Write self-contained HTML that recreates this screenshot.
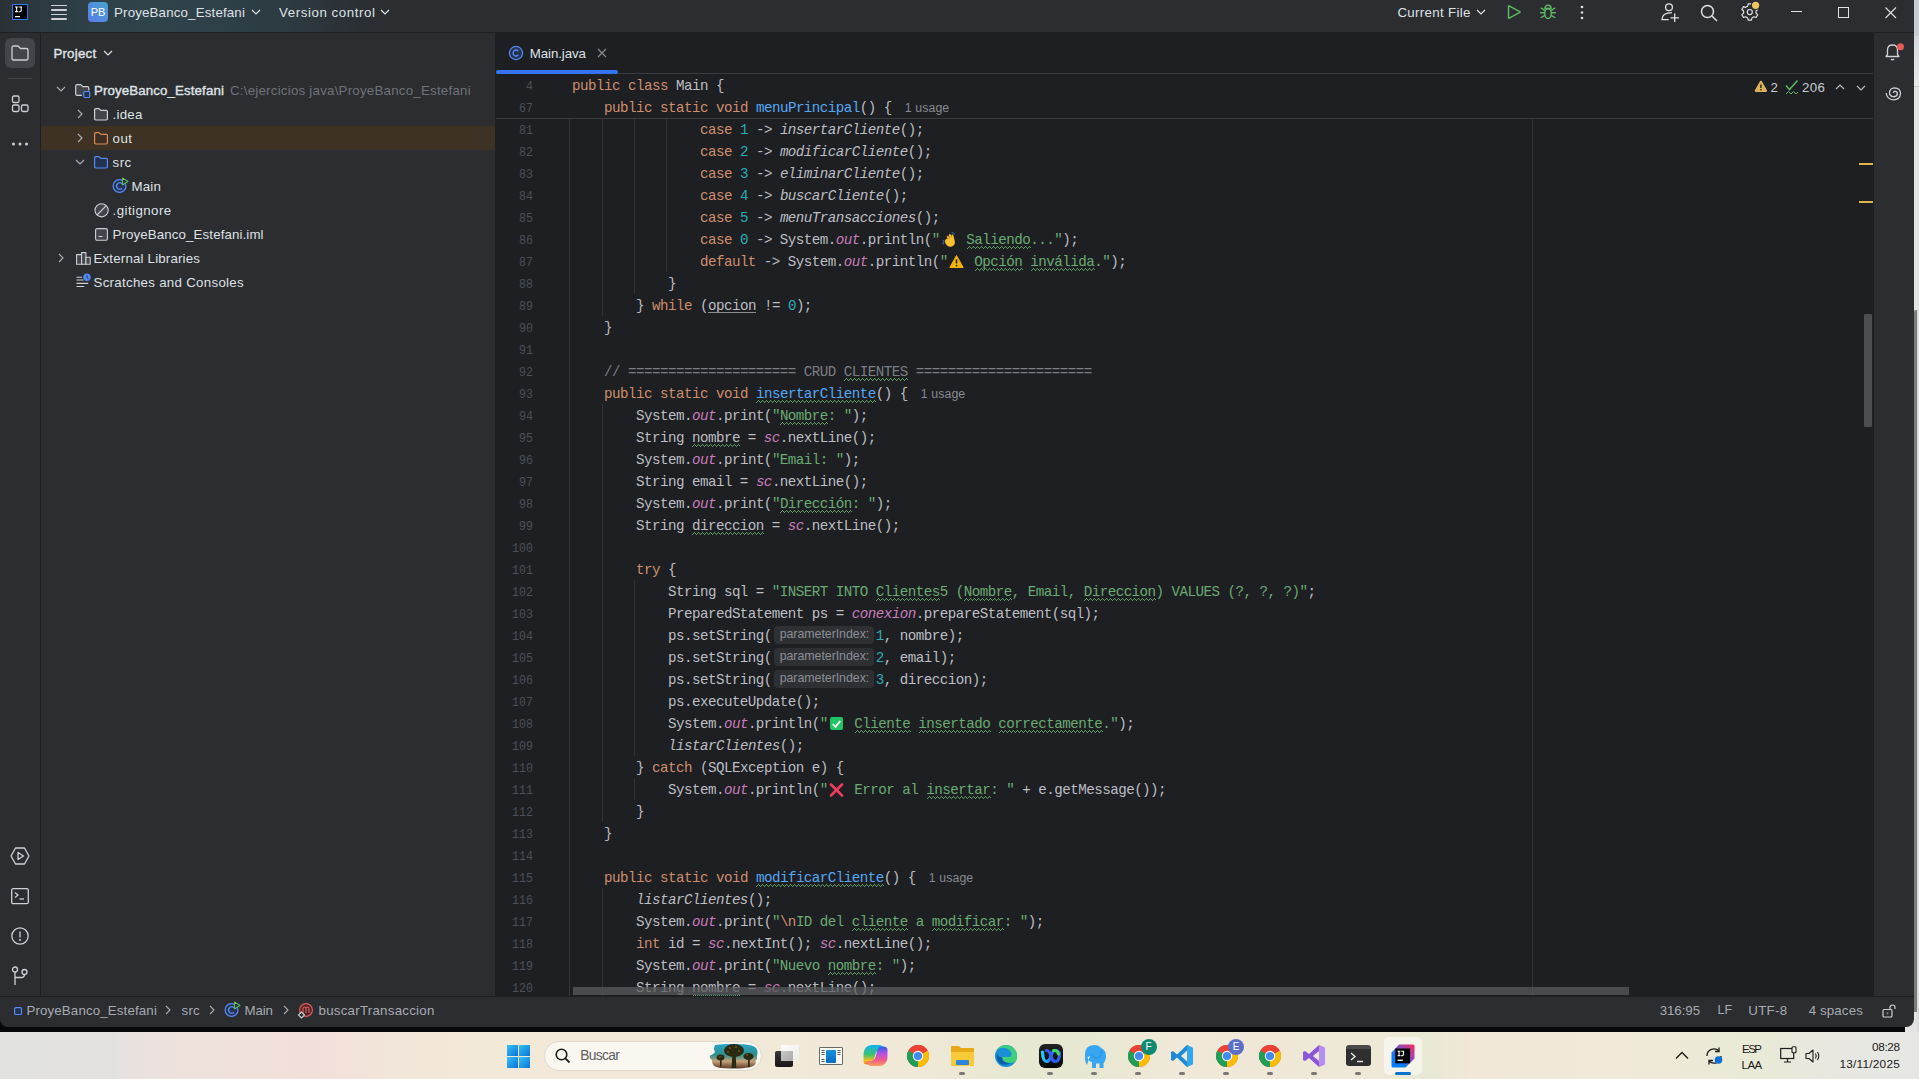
<!DOCTYPE html><html><head><meta charset="utf-8"><style>
*{box-sizing:border-box;margin:0;padding:0}
html,body{width:1919px;height:1079px;overflow:hidden}
body{position:relative;font-family:"Liberation Sans",sans-serif;background:#e4e4e2}
.a{position:absolute}
.ui{font-size:13px;color:#dfe1e5;white-space:nowrap;line-height:16px}
svg{display:block;overflow:visible}
#win{position:absolute;left:0;top:0;width:1914px;height:1027px;background:#2b2d30;overflow:hidden;border-radius:0 0 8px 8px}
#title{left:0;top:0;width:1914px;height:32px;background:linear-gradient(90deg,#2a3237 0px,#2e3f47 80px,#2f434b 150px,#2f414a 200px,#2d3a41 290px,#2b2f33 360px,#2b2d30 410px)}
.code{font-family:"Liberation Mono",monospace;font-size:14.2px;letter-spacing:-0.52px;line-height:22px;white-space:pre;color:#bcbec4}
.ln{font-family:"Liberation Mono",monospace;font-size:13.5px;line-height:22px;color:#4b5059;text-align:right;width:60px;transform:scaleX(0.86);transform-origin:100% 50%}
.k{color:#cf8e6d}.n{color:#2aacb8}.s{color:#6aab73}.m{color:#56a8f5}.f{color:#c77dbb;font-style:italic}.it{font-style:italic}.c{color:#7a7e85}
.em{display:inline-block;width:18.5px;height:22px;vertical-align:top;position:relative}
.em svg{position:absolute;left:1px;top:3px}
.hint{display:inline-block;vertical-align:top;height:22px;position:relative}
.hint span{position:absolute;left:2px;top:2px;height:18px;border-radius:4px;background:#393b40;color:#8c8f94;font-family:"Liberation Sans",sans-serif;font-size:12px;line-height:18px;padding:0 5px;white-space:nowrap}
.usage{font-family:"Liberation Sans",sans-serif;font-size:12.3px;letter-spacing:0.1px;color:#868a91}
.wv{position:absolute;height:3px;background:linear-gradient(90deg,#5e9e64 1px,transparent 1px) 0 2px/4px 1px repeat-x,linear-gradient(90deg,transparent 1px,#5e9e64 1px,#5e9e64 2px,transparent 2px,transparent 3px,#5e9e64 3px) 0 1px/4px 1px repeat-x,linear-gradient(90deg,transparent 2px,#5e9e64 2px,#5e9e64 3px,transparent 3px) 0 0/4px 1px repeat-x}
.guide{position:absolute;width:1px;background:#313337}
.tree{font-size:13px;color:#dfe1e5;line-height:24px;height:24px;white-space:nowrap}
</style></head><body>
<div class="a" style="left:0;top:1014px;width:1905px;height:18px;background:#07090d"></div>
<div id="win">
<div id="title" class="a">
<div class="a" style="left:12px;top:4px;width:16px;height:16px;background:#000;border:1px solid #2d7cf6;"></div>
<svg class="a" style="left:12px;top:4px" width="16" height="16"><path d="M3 3 H6.2 M4.6 3 V7.6 M3 7.6 H6.2" stroke="#fff" stroke-width="1.1" fill="none"/><path d="M6.8 3 H10 M9.2 3 V6.6 Q9.2 7.8 8 7.8 H6.8" stroke="#fff" stroke-width="1.1" fill="none"/><rect x="3" y="12" width="5" height="1.2" fill="#fff"/></svg>
<div class="a" style="left:51px;top:4.6px;width:16px;height:1.8px;background:#cfd1d5;border-radius:1px"></div>
<div class="a" style="left:51px;top:9.1px;width:16px;height:1.8px;background:#cfd1d5;border-radius:1px"></div>
<div class="a" style="left:51px;top:13.6px;width:16px;height:1.8px;background:#cfd1d5;border-radius:1px"></div>
<div class="a" style="left:51px;top:18.1px;width:16px;height:1.8px;background:#cfd1d5;border-radius:1px"></div>
<div class="a" style="left:88px;top:2px;width:20px;height:20px;border-radius:4px;background:linear-gradient(45deg,#5c7be8,#48a2cf)"></div>
<div class="a ui" style="left:89px;top:4px;width:18px;text-align:center;font-size:11px;color:#fff;letter-spacing:0px">PB</div>
<div class="a" style="left:114.00px;top:5.98px;font-size:13.3px;line-height:13.3px;letter-spacing:0.167px;color:#dfe1e5;white-space:nowrap;">ProyeBanco_Estefani</div>
<svg class="a" style="left:251px;top:9px" width="10" height="6"><path d="M1 1 L5 5 L9 1" stroke="#dfe1e5" stroke-width="1.2" fill="none"/></svg>
<div class="a" style="left:279.00px;top:5.98px;font-size:13.3px;line-height:13.3px;letter-spacing:0.571px;color:#dfe1e5;white-space:nowrap;">Version control</div>
<svg class="a" style="left:380px;top:9px" width="10" height="6"><path d="M1 1 L5 5 L9 1" stroke="#dfe1e5" stroke-width="1.2" fill="none"/></svg>
<div class="a" style="left:1397.40px;top:5.98px;font-size:13.3px;line-height:13.3px;letter-spacing:0.327px;color:#dfe1e5;white-space:nowrap;">Current File</div>
<svg class="a" style="left:1476px;top:9px" width="10" height="6"><path d="M1 1 L5 5 L9 1" stroke="#dfe1e5" stroke-width="1.2" fill="none"/></svg>
<svg class="a" style="left:1506px;top:4px" width="16" height="16"><path d="M3 1.8 Q2.5 1.5 2.5 2.3 V13.7 Q2.5 14.5 3.2 14.1 L13.8 8.4 Q14.4 8 13.8 7.6 Z" stroke="#5fb865" stroke-width="1.5" fill="none" stroke-linejoin="round"/></svg>
<svg class="a" style="left:1539px;top:4px" width="18" height="18"><g stroke="#5fb865" stroke-width="1.4" fill="none" stroke-linecap="round"><path d="M5.9 4.4 A3.1 3.1 0 0 1 12.1 4.4 Z"/><ellipse cx="9" cy="9.6" rx="3.3" ry="4.9"/><path d="M2.2 4.2 L5.4 6.2 M1.6 8.8 H5.6 M2.2 13.5 L5.4 11.6 M15.8 4.2 L12.6 6.2 M16.4 8.8 H12.4 M15.8 13.5 L12.6 11.6"/></g></svg>
<svg class="a" style="left:1578px;top:3.5px" width="8" height="18"><g fill="#dfe1e5"><circle cx="4" cy="3" r="1.3"/><circle cx="4" cy="8.5" r="1.3"/><circle cx="4" cy="14" r="1.3"/></g></svg>
<svg class="a" style="left:1660px;top:0px" width="22" height="24"><g stroke="#dfe1e5" stroke-width="1.3" fill="none"><circle cx="9" cy="7.2" r="3.4"/><path d="M8.75 19.6 H2 Q2 12.6 11.9 12.6"/><path d="M14.7 13.6 V22 M10.5 17.8 H19"/></g></svg>
<svg class="a" style="left:1700px;top:4px" width="18" height="18"><g stroke="#dfe1e5" stroke-width="1.5" fill="none"><circle cx="7.5" cy="7.5" r="6"/><path d="M12 12 L17 17"/></g></svg>
<svg class="a" style="left:1740px;top:2px" width="20" height="20"><g transform="translate(0.8 0.6) scale(0.9)" stroke="#dfe1e5" stroke-width="1.3" fill="none"><path d="M8.2 1.5 H11.8 L12.4 4 L14.6 5.3 L17 4.5 L18.8 7.6 L16.9 9.3 V11.7 L18.8 13.4 L17 16.5 L14.6 15.7 L12.4 17 L11.8 19.5 H8.2 L7.6 17 L5.4 15.7 L3 16.5 L1.2 13.4 L3.1 11.7 V9.3 L1.2 7.6 L3 4.5 L5.4 5.3 L7.6 4 Z" stroke-linejoin="round"/><circle cx="10" cy="10.5" r="2.8"/></g><circle cx="15.6" cy="3.3" r="4.8" fill="#2b2d30"/><circle cx="15.6" cy="3.3" r="3.6" fill="#f2c55c"/></svg>
<div class="a" style="left:1791px;top:11px;width:11px;height:1px;background:#dfe1e5"></div>
<div class="a" style="left:1838px;top:7px;width:11px;height:11px;border:1px solid #dfe1e5"></div>
<svg class="a" style="left:1884.5px;top:6.5px" width="12" height="12"><path d="M0.5 0.5 L11 11 M11 0.5 L0.5 11" stroke="#dfe1e5" stroke-width="1.1"/></svg>
</div>
<div class="a" style="left:0;top:32px;width:1914px;height:1px;background:#1e1f22"></div>
<div class="a" style="left:40px;top:33px;width:1px;height:963px;background:#1e1f22"></div>
<div class="a" style="left:5px;top:38px;width:30px;height:30px;border-radius:6px;background:#43454a"></div>
<svg class="a" style="left:11px;top:45px" width="18" height="16"><path d="M1 2.5 Q1 1 2.5 1 H7 L9.5 3.5 H15.5 Q17 3.5 17 5 V13.5 Q17 15 15.5 15 H2.5 Q1 15 1 13.5 Z" stroke="#ced0d6" stroke-width="1.3" fill="none" stroke-linejoin="round"/></svg>
<div class="a" style="left:8px;top:78px;width:24px;height:1px;background:#43454a"></div>
<svg class="a" style="left:11px;top:95px" width="18" height="18"><g stroke="#ced0d6" stroke-width="1.3" fill="none"><rect x="1.5" y="1" width="6.5" height="6.5" rx="1.5"/><rect x="1.5" y="10" width="6.5" height="6.5" rx="1.5"/><rect x="10.5" y="10" width="6.5" height="6.5" rx="1.5"/></g></svg>
<svg class="a" style="left:10px;top:140px" width="20" height="8"><g fill="#ced0d6"><circle cx="3.5" cy="4" r="1.5"/><circle cx="10" cy="4" r="1.5"/><circle cx="16.5" cy="4" r="1.5"/></g></svg>
<svg class="a" style="left:10px;top:847px" width="20" height="18"><g stroke="#ced0d6" stroke-width="1.3" fill="none" stroke-linejoin="round"><path d="M5.5 1 H14.5 L19 9 L14.5 17 H5.5 L1 9 Z"/><path d="M8 5.5 L13.5 9 L8 12.5 Z"/></g></svg>
<svg class="a" style="left:11px;top:888px" width="18" height="17"><g stroke="#ced0d6" stroke-width="1.3" fill="none"><rect x="0.7" y="0.7" width="16.6" height="15" rx="1.5"/><path d="M4 4.5 L7 7 L4 9.5"/><path d="M8.5 11 H13"/></g></svg>
<svg class="a" style="left:11px;top:927px" width="18" height="18"><g stroke="#ced0d6" stroke-width="1.3" fill="none"><circle cx="9" cy="9" r="8.2"/><path d="M9 4.5 V10.5"/></g><circle cx="9" cy="13" r="1" fill="#ced0d6"/></svg>
<svg class="a" style="left:11px;top:966px" width="18" height="20"><g stroke="#ced0d6" stroke-width="1.3" fill="none"><circle cx="4" cy="3.5" r="2.5"/><circle cx="13.5" cy="6" r="2.5"/><path d="M4 6 V19"/><path d="M13.5 8.5 Q13.5 11.5 10 11.5 H4"/></g></svg>
<div id="more"></div>
<div class="a" style="left:53.40px;top:46.78px;font-size:13.3px;line-height:13.3px;letter-spacing:0.217px;color:#dfe1e5;white-space:nowrap;-webkit-text-stroke:0.4px #dfe1e5;">Project</div>
<svg class="a" style="left:103px;top:50px" width="10" height="6"><path d="M1 1 L5 5 L9 1" stroke="#dfe1e5" stroke-width="1.2" fill="none"/></svg>
<div class="a" style="left:41px;top:126px;width:454px;height:24px;background:#3d3223"></div>
<svg class="a" style="left:56px;top:86px" width="10" height="6"><path d="M1 1 L5 5 L9 1" stroke="#a8abb0" stroke-width="1.2" fill="none"/></svg>
<svg class="a" style="left:75px;top:84px" width="16" height="15"><path d="M7 11.3 H2 Q0.7 11.3 0.7 10 V2 Q0.7 0.7 2 0.7 H5.8 L7.8 2.7 H12.5 Q13.8 2.7 13.8 4 V6.5" stroke="#ced0d6" stroke-width="1.2" fill="#43454a" stroke-linejoin="round"/><rect x="8.7" y="7.5" width="6" height="6" rx="1.2" stroke="#548af7" stroke-width="1.2" fill="#25324d"/></svg>
<div class="a" style="left:93.90px;top:83.78px;font-size:13.3px;line-height:13.3px;letter-spacing:0.117px;color:#dfe1e5;white-space:nowrap;-webkit-text-stroke:0.4px #dfe1e5;">ProyeBanco_Estefani</div>
<div class="a" style="left:230.00px;top:83.78px;font-size:13.3px;line-height:13.3px;letter-spacing:0.230px;color:#6f737a;white-space:nowrap;">C:\ejercicios java\ProyeBanco_Estefani</div>
<svg class="a" style="left:77px;top:109px" width="6" height="10"><path d="M1 1 L5 5 L1 9" stroke="#a8abb0" stroke-width="1.2" fill="none"/></svg>
<svg class="a" style="left:94px;top:108px" width="15" height="13"><path d="M0.6 1.8 Q0.6 0.6 1.8 0.6 H5 L6.8 2.4 H12.2 Q13.4 2.4 13.4 3.6 V10.8 Q13.4 12 12.2 12 H1.8 Q0.6 12 0.6 10.8 Z" stroke="#ced0d6" stroke-width="1.2" fill="#43454a" stroke-linejoin="round"/></svg>
<div class="a" style="left:112.50px;top:107.68px;font-size:13.3px;line-height:13.3px;letter-spacing:0.250px;color:#dfe1e5;white-space:nowrap;">.idea</div>
<svg class="a" style="left:77px;top:133px" width="6" height="10"><path d="M1 1 L5 5 L1 9" stroke="#a8abb0" stroke-width="1.2" fill="none"/></svg>
<svg class="a" style="left:94px;top:132px" width="15" height="13"><path d="M0.6 1.8 Q0.6 0.6 1.8 0.6 H5 L6.8 2.4 H12.2 Q13.4 2.4 13.4 3.6 V10.8 Q13.4 12 12.2 12 H1.8 Q0.6 12 0.6 10.8 Z" stroke="#d98b5b" stroke-width="1.2" fill="#3f2e23" stroke-linejoin="round"/></svg>
<div class="a" style="left:112.50px;top:131.68px;font-size:13.3px;line-height:13.3px;letter-spacing:0.500px;color:#dfe1e5;white-space:nowrap;">out</div>
<svg class="a" style="left:75px;top:159px" width="10" height="6"><path d="M1 1 L5 5 L9 1" stroke="#a8abb0" stroke-width="1.2" fill="none"/></svg>
<svg class="a" style="left:94px;top:156px" width="15" height="13"><path d="M0.6 1.8 Q0.6 0.6 1.8 0.6 H5 L6.8 2.4 H12.2 Q13.4 2.4 13.4 3.6 V10.8 Q13.4 12 12.2 12 H1.8 Q0.6 12 0.6 10.8 Z" stroke="#548af7" stroke-width="1.2" fill="#25324d" stroke-linejoin="round"/></svg>
<div class="a" style="left:112.50px;top:155.68px;font-size:13.3px;line-height:13.3px;letter-spacing:0.500px;color:#dfe1e5;white-space:nowrap;">src</div>
<svg class="a" style="left:112px;top:177px" width="17" height="17"><circle cx="7.5" cy="9" r="6.4" stroke="#548af7" stroke-width="1.2" fill="#25324d"/><path d="M10 6.7 A3.2 3.2 0 1 0 10 11.3" stroke="#548af7" stroke-width="1.3" fill="none"/><path d="M10.5 1 L16 4.5 L10.5 8 Z" fill="#2a3a2a" stroke="#5fb865" stroke-width="1.1" stroke-linejoin="round"/></svg>
<div class="a" style="left:131.50px;top:179.68px;font-size:13.3px;line-height:13.3px;letter-spacing:0.167px;color:#dfe1e5;white-space:nowrap;">Main</div>
<svg class="a" style="left:93.5px;top:202.5px" width="16" height="16"><circle cx="7.6" cy="7.3" r="6.6" stroke="#ced0d6" stroke-width="1.1" fill="#43454a"/><path d="M3 12 L12.3 2.7" stroke="#ced0d6" stroke-width="1.1"/></svg>
<div class="a" style="left:112.50px;top:203.68px;font-size:13.3px;line-height:13.3px;letter-spacing:0.444px;color:#dfe1e5;white-space:nowrap;">.gitignore</div>
<svg class="a" style="left:94.5px;top:227.5px" width="14" height="14"><rect x="0.6" y="0.6" width="11.8" height="11.6" rx="1.5" stroke="#ced0d6" stroke-width="1.1" fill="#43454a"/><path d="M3.5 8.5 H7.5" stroke="#ced0d6" stroke-width="1.1"/></svg>
<div class="a" style="left:112.50px;top:227.68px;font-size:13.3px;line-height:13.3px;letter-spacing:0.114px;color:#dfe1e5;white-space:nowrap;">ProyeBanco_Estefani.iml</div>
<svg class="a" style="left:57.5px;top:253px" width="6" height="10"><path d="M1 1 L5 5 L1 9" stroke="#a8abb0" stroke-width="1.2" fill="none"/></svg>
<svg class="a" style="left:75.5px;top:251.5px" width="15" height="13"><g stroke="#ced0d6" stroke-width="1.1" fill="#43454a" stroke-linejoin="round"><rect x="0.6" y="2.6" width="5" height="9.6"/><rect x="5.6" y="0.6" width="4.3" height="11.6"/><rect x="9.9" y="5.2" width="4.3" height="7"/></g></svg>
<div class="a" style="left:93.50px;top:251.68px;font-size:13.3px;line-height:13.3px;letter-spacing:0.176px;color:#dfe1e5;white-space:nowrap;">External Libraries</div>
<svg class="a" style="left:75.5px;top:273px" width="16" height="16"><g stroke="#ced0d6" stroke-width="1.1"><path d="M0.5 4.3 H6.2 M0.5 7 H7.5 M0.5 10.4 H12.2 M0.5 13.5 H8.2"/></g><circle cx="11" cy="4.3" r="3.7" fill="#548af7"/><path d="M11 2.3 V4.5 L12.5 5.7" stroke="#2b2d30" stroke-width="0.9" fill="none"/></svg>
<div class="a" style="left:93.50px;top:275.68px;font-size:13.3px;line-height:13.3px;letter-spacing:0.286px;color:#dfe1e5;white-space:nowrap;">Scratches and Consoles</div>
<div class="a" style="left:495px;top:33px;width:1px;height:963px;background:#1e1f22"></div>
<div class="a" style="left:496px;top:33px;width:1377px;height:963px;background:#1e1f22"></div>
<svg class="a" style="left:508px;top:45px" width="16" height="16"><circle cx="8" cy="8" r="6.6" stroke="#548af7" stroke-width="1.2" fill="#25324d"/><path d="M10.3 6 A3 3 0 1 0 10.3 10" stroke="#548af7" stroke-width="1.3" fill="none"/></svg>
<div class="a" style="left:529.80px;top:46.78px;font-size:13.3px;line-height:13.3px;letter-spacing:-0.088px;color:#dfe1e5;white-space:nowrap;">Main.java</div>
<svg class="a" style="left:597px;top:48px" width="10" height="10"><path d="M1 1 L9 9 M9 1 L1 9" stroke="#8c8f94" stroke-width="1.1"/></svg>
<div class="a" style="left:496px;top:73px;width:1377px;height:1px;background:#393b40"></div>
<div class="a" style="left:496px;top:70px;width:122px;height:4px;border-radius:2px;background:#3574f0"></div>
<div class="a" style="left:496px;top:118px;width:1377px;height:1px;background:#393b40"></div>
<div class="a" style="left:1532px;top:118px;width:1px;height:878px;background:#313337"></div>
<div class="guide" style="left:569px;top:119px;height:877px"></div>
<div class="guide" style="left:602px;top:119px;height:197px"></div>
<div class="guide" style="left:602px;top:404px;height:418px"></div>
<div class="guide" style="left:602px;top:888px;height:108px"></div>
<div class="guide" style="left:634px;top:119px;height:175px"></div>
<div class="guide" style="left:634px;top:580px;height:176px"></div>
<div class="guide" style="left:634px;top:778px;height:22px"></div>
<div class="guide" style="left:666px;top:119px;height:153px"></div>
<div class="a ln" style="left:472.8px;top:75.5px">4</div>
<div class="a code" style="left:572px;top:75px"><span class="k">public</span> <span class="k">class</span> Main {</div>
<div class="a ln" style="left:472.8px;top:97.5px">67</div>
<div class="a code" style="left:572px;top:97px">    <span class="k">public</span> <span class="k">static</span> <span class="k">void</span> <span class="m">menuPrincipal</span>() {<span class="usage" style="margin-left:13px">1 usage</span></div>
<div class="a ln" style="left:472.8px;top:119.5px">81</div>
<div class="a code" style="left:572px;top:119px">                <span class="k">case</span> <span class="n">1</span> -&gt; <span class="it">insertarCliente</span>();</div>
<div class="a ln" style="left:472.8px;top:141.5px">82</div>
<div class="a code" style="left:572px;top:141px">                <span class="k">case</span> <span class="n">2</span> -&gt; <span class="it">modificarCliente</span>();</div>
<div class="a ln" style="left:472.8px;top:163.5px">83</div>
<div class="a code" style="left:572px;top:163px">                <span class="k">case</span> <span class="n">3</span> -&gt; <span class="it">eliminarCliente</span>();</div>
<div class="a ln" style="left:472.8px;top:185.5px">84</div>
<div class="a code" style="left:572px;top:185px">                <span class="k">case</span> <span class="n">4</span> -&gt; <span class="it">buscarCliente</span>();</div>
<div class="a ln" style="left:472.8px;top:207.5px">85</div>
<div class="a code" style="left:572px;top:207px">                <span class="k">case</span> <span class="n">5</span> -&gt; <span class="it">menuTransacciones</span>();</div>
<div class="a ln" style="left:472.8px;top:229.5px">86</div>
<div class="a code" style="left:572px;top:229px">                <span class="k">case</span> <span class="n">0</span> -&gt; System.<span class="f">out</span>.println(<span class="s">&quot;</span><span class="em"><svg width="18" height="16"><g fill="#fbc02d"><path d="M6 13.5 Q3.5 11 4 8.5 L5 7 Q5.8 6.3 6.5 7 L7.2 8 L5.8 5 Q5.5 4 6.5 3.8 Q7.2 3.8 7.6 4.5 L9 7 L7.8 3.2 Q7.6 2.2 8.6 2 Q9.4 2 9.8 2.8 L11 6.2 L10.4 3.5 Q10.3 2.6 11.2 2.5 Q12 2.5 12.3 3.3 L13.5 8 Q14.5 11.5 12.5 13.5 Q9.5 16 6 13.5 Z"/></g><path d="M2 8.5 L3.5 10 M1.5 10.5 L3 12" stroke="#3d6fc0" stroke-width="1.1"/><path d="M10.5 0.8 Q12.5 0.5 13.5 2.5" stroke="#3d6fc0" stroke-width="1.1" fill="none"/></svg></span><span class="s"> </span><span class="s">Saliendo</span><span class="s">...&quot;</span>);</div>
<div class="wv" style="left:966.50px;top:246px;width:64.00px"></div>
<div class="a ln" style="left:472.8px;top:251.5px">87</div>
<div class="a code" style="left:572px;top:251px">                <span class="k">default</span> -&gt; System.<span class="f">out</span>.println(<span class="s">&quot;</span><span class="em"><svg width="15" height="15"><path d="M7.5 1.5 L14.2 13.5 H0.8 Z" fill="#f2b400" stroke="#f2b400" stroke-width="1" stroke-linejoin="round"/><path d="M7.5 5.5 V9.5" stroke="#1e1f22" stroke-width="1.6"/><circle cx="7.5" cy="11.6" r="0.9" fill="#1e1f22"/></svg></span><span class="s"> </span><span class="s">Opción</span><span class="s"> </span><span class="s">inválida</span><span class="s">.&quot;</span>);</div>
<div class="wv" style="left:974.50px;top:268px;width:48.00px"></div>
<div class="wv" style="left:1030.50px;top:268px;width:64.00px"></div>
<div class="a ln" style="left:472.8px;top:273.5px">88</div>
<div class="a code" style="left:572px;top:273px">            }</div>
<div class="a ln" style="left:472.8px;top:295.5px">89</div>
<div class="a code" style="left:572px;top:295px">        } <span class="k">while</span> (opcion != <span class="n">0</span>);</div>
<div class="a ln" style="left:472.8px;top:317.5px">90</div>
<div class="a code" style="left:572px;top:317px">    }</div>
<div class="a ln" style="left:472.8px;top:339.5px">91</div>
<div class="a code" style="left:572px;top:339px"></div>
<div class="a ln" style="left:472.8px;top:361.5px">92</div>
<div class="a code" style="left:572px;top:361px">    <span class="c">// ===================== CRUD </span><span class="c">CLIENTES</span><span class="c"> ======================</span></div>
<div class="wv" style="left:844.00px;top:378px;width:64.00px"></div>
<div class="a ln" style="left:472.8px;top:383.5px">93</div>
<div class="a code" style="left:572px;top:383px">    <span class="k">public</span> <span class="k">static</span> <span class="k">void</span> <span class="m">insertarCliente</span>() {<span class="usage" style="margin-left:13px">1 usage</span></div>
<div class="wv" style="left:756.00px;top:400px;width:120.00px"></div>
<div class="a ln" style="left:472.8px;top:405.5px">94</div>
<div class="a code" style="left:572px;top:405px">        System.<span class="f">out</span>.print(<span class="s">&quot;</span><span class="s">Nombre</span><span class="s">: &quot;</span>);</div>
<div class="wv" style="left:780.00px;top:422px;width:48.00px"></div>
<div class="a ln" style="left:472.8px;top:427.5px">95</div>
<div class="a code" style="left:572px;top:427px">        String nombre = <span class="f">sc</span>.nextLine();</div>
<div class="wv" style="left:692.00px;top:444px;width:48.00px"></div>
<div class="a ln" style="left:472.8px;top:449.5px">96</div>
<div class="a code" style="left:572px;top:449px">        System.<span class="f">out</span>.print(<span class="s">&quot;Email: &quot;</span>);</div>
<div class="a ln" style="left:472.8px;top:471.5px">97</div>
<div class="a code" style="left:572px;top:471px">        String email = <span class="f">sc</span>.nextLine();</div>
<div class="a ln" style="left:472.8px;top:493.5px">98</div>
<div class="a code" style="left:572px;top:493px">        System.<span class="f">out</span>.print(<span class="s">&quot;</span><span class="s">Dirección</span><span class="s">: &quot;</span>);</div>
<div class="wv" style="left:780.00px;top:510px;width:72.00px"></div>
<div class="a ln" style="left:472.8px;top:515.5px">99</div>
<div class="a code" style="left:572px;top:515px">        String direccion = <span class="f">sc</span>.nextLine();</div>
<div class="wv" style="left:692.00px;top:532px;width:72.00px"></div>
<div class="a ln" style="left:472.8px;top:537.5px">100</div>
<div class="a code" style="left:572px;top:537px"></div>
<div class="a ln" style="left:472.8px;top:559.5px">101</div>
<div class="a code" style="left:572px;top:559px">        <span class="k">try</span> {</div>
<div class="a ln" style="left:472.8px;top:581.5px">102</div>
<div class="a code" style="left:572px;top:581px">            String sql = <span class="s">&quot;INSERT INTO </span><span class="s">Clientes</span><span class="s">5</span><span class="s"> (</span><span class="s">Nombre</span><span class="s">, Email, </span><span class="s">Direccion</span><span class="s">) VALUES (?, ?, ?)&quot;</span>;</div>
<div class="wv" style="left:876.00px;top:598px;width:64.00px"></div>
<div class="wv" style="left:964.00px;top:598px;width:48.00px"></div>
<div class="wv" style="left:1084.00px;top:598px;width:72.00px"></div>
<div class="a ln" style="left:472.8px;top:603.5px">103</div>
<div class="a code" style="left:572px;top:603px">            PreparedStatement ps = <span class="f">conexion</span>.prepareStatement(sql);</div>
<div class="a ln" style="left:472.8px;top:625.5px">104</div>
<div class="a code" style="left:572px;top:625px">            ps.setString(<span class="hint" style="width:104px"></span><span class="n">1</span>, nombre);</div>
<div class="a" style="left:774px;top:626px;width:100px;height:18px;border-radius:4px;background:#2e3034"></div>
<div class="a" style="left:779.70px;top:628.38px;font-size:12.4px;line-height:12.4px;letter-spacing:-0.050px;color:#8b8e94;white-space:nowrap;">parameterIndex:</div>
<div class="a ln" style="left:472.8px;top:647.5px">105</div>
<div class="a code" style="left:572px;top:647px">            ps.setString(<span class="hint" style="width:104px"></span><span class="n">2</span>, email);</div>
<div class="a" style="left:774px;top:648px;width:100px;height:18px;border-radius:4px;background:#2e3034"></div>
<div class="a" style="left:779.70px;top:650.38px;font-size:12.4px;line-height:12.4px;letter-spacing:-0.050px;color:#8b8e94;white-space:nowrap;">parameterIndex:</div>
<div class="a ln" style="left:472.8px;top:669.5px">106</div>
<div class="a code" style="left:572px;top:669px">            ps.setString(<span class="hint" style="width:104px"></span><span class="n">3</span>, direccion);</div>
<div class="a" style="left:774px;top:670px;width:100px;height:18px;border-radius:4px;background:#2e3034"></div>
<div class="a" style="left:779.70px;top:672.38px;font-size:12.4px;line-height:12.4px;letter-spacing:-0.050px;color:#8b8e94;white-space:nowrap;">parameterIndex:</div>
<div class="a ln" style="left:472.8px;top:691.5px">107</div>
<div class="a code" style="left:572px;top:691px">            ps.executeUpdate();</div>
<div class="a ln" style="left:472.8px;top:713.5px">108</div>
<div class="a code" style="left:572px;top:713px">            System.<span class="f">out</span>.println(<span class="s">&quot;</span><span class="em"><svg width="15" height="15"><rect x="1" y="1" width="13" height="13" rx="2" fill="#20c463"/><path d="M3.8 8 L6.5 10.8 L11.3 5" stroke="#fff" stroke-width="1.8" fill="none"/></svg></span><span class="s"> </span><span class="s">Cliente</span><span class="s"> </span><span class="s">insertado</span><span class="s"> </span><span class="s">correctamente</span><span class="s">.&quot;</span>);</div>
<div class="wv" style="left:854.50px;top:730px;width:56.00px"></div>
<div class="wv" style="left:918.50px;top:730px;width:72.00px"></div>
<div class="wv" style="left:998.50px;top:730px;width:104.00px"></div>
<div class="a ln" style="left:472.8px;top:735.5px">109</div>
<div class="a code" style="left:572px;top:735px">            <span class="it">listarClientes</span>();</div>
<div class="a ln" style="left:472.8px;top:757.5px">110</div>
<div class="a code" style="left:572px;top:757px">        } <span class="k">catch</span> (SQLException e) {</div>
<div class="a ln" style="left:472.8px;top:779.5px">111</div>
<div class="a code" style="left:572px;top:779px">            System.<span class="f">out</span>.println(<span class="s">&quot;</span><span class="em"><svg width="15" height="15"><path d="M2 2.5 L13 13.5 M13 2.5 L2 13.5" stroke="#ef3b5d" stroke-width="2.6" stroke-linecap="round"/></svg></span><span class="s"> Error al </span><span class="s">insertar</span><span class="s">: &quot;</span> + e.getMessage());</div>
<div class="wv" style="left:926.50px;top:796px;width:64.00px"></div>
<div class="a ln" style="left:472.8px;top:801.5px">112</div>
<div class="a code" style="left:572px;top:801px">        }</div>
<div class="a ln" style="left:472.8px;top:823.5px">113</div>
<div class="a code" style="left:572px;top:823px">    }</div>
<div class="a ln" style="left:472.8px;top:845.5px">114</div>
<div class="a code" style="left:572px;top:845px"></div>
<div class="a ln" style="left:472.8px;top:867.5px">115</div>
<div class="a code" style="left:572px;top:867px">    <span class="k">public</span> <span class="k">static</span> <span class="k">void</span> <span class="m">modificarCliente</span>() {<span class="usage" style="margin-left:13px">1 usage</span></div>
<div class="wv" style="left:756.00px;top:884px;width:128.00px"></div>
<div class="a ln" style="left:472.8px;top:889.5px">116</div>
<div class="a code" style="left:572px;top:889px">        <span class="it">listarClientes</span>();</div>
<div class="a ln" style="left:472.8px;top:911.5px">117</div>
<div class="a code" style="left:572px;top:911px">        System.<span class="f">out</span>.print(<span class="s">&quot;</span><span class="k">\n</span><span class="s">ID del </span><span class="s">cliente</span><span class="s"> a </span><span class="s">modificar</span><span class="s">: &quot;</span>);</div>
<div class="wv" style="left:852.00px;top:928px;width:56.00px"></div>
<div class="wv" style="left:932.00px;top:928px;width:72.00px"></div>
<div class="a ln" style="left:472.8px;top:933.5px">118</div>
<div class="a code" style="left:572px;top:933px">        <span class="k">int</span> id = <span class="f">sc</span>.nextInt(); <span class="f">sc</span>.nextLine();</div>
<div class="a ln" style="left:472.8px;top:955.5px">119</div>
<div class="a code" style="left:572px;top:955px">        System.<span class="f">out</span>.print(<span class="s">&quot;Nuevo </span><span class="s">nombre</span><span class="s">: &quot;</span>);</div>
<div class="wv" style="left:828.00px;top:972px;width:48.00px"></div>
<div class="a ln" style="left:472.8px;top:977.5px">120</div>
<div class="a code" style="left:572px;top:977px">        String nombre = <span class="f">sc</span>.nextLine();</div>
<div class="wv" style="left:692.00px;top:994px;width:48.00px"></div>
<svg class="a" style="left:0;top:0" width="1919" height="1079"><path d="M708 312.5 H756" stroke="#8a8c90" stroke-width="1" fill="none"/></svg>
<div class="a" style="left:1864px;top:314px;width:8px;height:113px;border-radius:1px;background:#4d4e51"></div>
<div class="a" style="left:1859px;top:163px;width:14px;height:2px;background:#e0b44e"></div>
<div class="a" style="left:1859px;top:201px;width:14px;height:2px;background:#e0b44e"></div>
<div class="a" style="left:573px;top:987px;width:1056px;height:8px;background:rgba(90,91,94,0.75)"></div>
<svg class="a" style="left:1754px;top:80px" width="14" height="14"><path d="M6.9 1.8 L12 10.8 H1.8 Z" fill="#dcb35c" stroke="#dcb35c" stroke-width="2.2" stroke-linejoin="round"/><path d="M6.9 4.5 V8" stroke="#1e1f22" stroke-width="1.4"/><rect x="6.2" y="9" width="1.4" height="1.4" fill="#1e1f22"/></svg>
<div class="a" style="left:1770.40px;top:81.08px;font-size:13.3px;line-height:13.3px;letter-spacing:0.000px;color:#c9cbd0;white-space:nowrap;">2</div>
<svg class="a" style="left:1785px;top:79px" width="14" height="16"><path d="M1 6.5 L4.5 10.5 L12.5 1.5" stroke="#5fb865" stroke-width="1.5" fill="none"/><path d="M1 15 L3.5 12.5 L6 15 L8.5 12.5 L11 15 L13 13" stroke="#5fb865" stroke-width="1" fill="none"/></svg>
<div class="a" style="left:1801.90px;top:81.08px;font-size:13.3px;line-height:13.3px;letter-spacing:0.350px;color:#c9cbd0;white-space:nowrap;">206</div>
<svg class="a" style="left:1835px;top:84px" width="10" height="6"><path d="M1 5 L5 1 L9 5" stroke="#bcbec4" stroke-width="1.1" fill="none"/></svg>
<svg class="a" style="left:1856px;top:85px" width="10" height="6"><path d="M1 1 L5 5 L9 1" stroke="#bcbec4" stroke-width="1.1" fill="none"/></svg>
<div class="a" style="left:1873px;top:33px;width:1px;height:963px;background:#1e1f22"></div>
<svg class="a" style="left:1884px;top:42px" width="20" height="22"><g stroke="#ced0d6" stroke-width="1.3" fill="none"><path d="M2 14.5 H15 L13.5 12.5 V8 Q13.5 3 8.5 3 Q3.5 3 3.5 8 V12.5 Z" stroke-linejoin="round"/><path d="M7 17 Q8.5 18.5 10 17"/></g><circle cx="16.5" cy="4.7" r="3.5" fill="#e55b5b"/></svg>
<svg class="a" style="left:1885px;top:84px" width="18" height="18"><path d="M8.5 9 Q8.5 7 10.5 7.3 Q12.8 7.8 12.3 10.3 Q11.5 13 8 12.7 Q4.3 12 4.5 8.5 Q5 4 9.5 3.8 Q15.5 4 15.5 9.5 Q15 15.8 8.5 15.8 Q2 15.5 1.2 9" stroke="#ced0d6" stroke-width="1.3" fill="none"/></svg>
<div class="a" style="left:0;top:996px;width:1914px;height:1px;background:#1e1f22"></div>
<svg class="a" style="left:14px;top:1007px" width="9" height="9"><rect x="0.6" y="0.6" width="6.9" height="6.9" rx="1.3" stroke="#548af7" stroke-width="1.2" fill="#25324d"/></svg>
<div class="a" style="left:26.40px;top:1003.88px;font-size:13.3px;line-height:13.3px;letter-spacing:0.144px;color:#a8abb0;white-space:nowrap;">ProyeBanco_Estefani</div>
<svg class="a" style="left:165px;top:1005px" width="6" height="10"><path d="M1 1 L5 5 L1 9" stroke="#a8abb0" stroke-width="1.1" fill="none"/></svg>
<div class="a" style="left:181.50px;top:1003.88px;font-size:13.3px;line-height:13.3px;letter-spacing:0.250px;color:#a8abb0;white-space:nowrap;">src</div>
<svg class="a" style="left:209px;top:1005px" width="6" height="10"><path d="M1 1 L5 5 L1 9" stroke="#a8abb0" stroke-width="1.1" fill="none"/></svg>
<svg class="a" style="left:224px;top:1001px" width="17" height="17"><circle cx="7.5" cy="9" r="6.4" stroke="#548af7" stroke-width="1.2" fill="#25324d"/><path d="M10 6.7 A3.2 3.2 0 1 0 10 11.3" stroke="#548af7" stroke-width="1.3" fill="none"/><path d="M10.5 1 L16 4.5 L10.5 8 Z" fill="#2a3a2a" stroke="#5fb865" stroke-width="1.1" stroke-linejoin="round"/></svg>
<div class="a" style="left:244.60px;top:1003.88px;font-size:13.3px;line-height:13.3px;letter-spacing:-0.200px;color:#a8abb0;white-space:nowrap;">Main</div>
<svg class="a" style="left:283px;top:1005px" width="6" height="10"><path d="M1 1 L5 5 L1 9" stroke="#a8abb0" stroke-width="1.1" fill="none"/></svg>
<svg class="a" style="left:297px;top:1002px" width="17" height="17"><circle cx="9" cy="8" r="6.4" stroke="#e55b5b" stroke-width="1.2" fill="#4a2626"/><path d="M6 11 V6.5 Q6 5 7.5 5 Q9 5 9 6.5 V11 M9 6.5 Q9 5 10.5 5 Q12 5 12 6.5 V11" stroke="#e55b5b" stroke-width="1.1" fill="none"/><path d="M4.5 10 L7.5 13 L4.5 16 L1.5 13 Z" fill="#2b2d30" stroke="#ced0d6" stroke-width="1.1"/></svg>
<div class="a" style="left:318.50px;top:1003.88px;font-size:13.3px;line-height:13.3px;letter-spacing:0.250px;color:#a8abb0;white-space:nowrap;">buscarTransaccion</div>
<div class="a" style="left:1659.70px;top:1003.88px;font-size:13.3px;line-height:13.3px;letter-spacing:-0.060px;color:#a8abb0;white-space:nowrap;">316:95</div>
<div class="a" style="left:1717.60px;top:1003.96px;font-size:12.6px;line-height:12.6px;letter-spacing:0.000px;color:#a8abb0;white-space:nowrap;">LF</div>
<div class="a" style="left:1748.30px;top:1003.88px;font-size:13.3px;line-height:13.3px;letter-spacing:0.300px;color:#a8abb0;white-space:nowrap;">UTF-8</div>
<div class="a" style="left:1808.70px;top:1003.88px;font-size:13.3px;line-height:13.3px;letter-spacing:0.129px;color:#a8abb0;white-space:nowrap;">4 spaces</div>
<svg class="a" style="left:1882px;top:1004px" width="16" height="14"><rect x="1" y="5.5" width="9" height="7.5" rx="1.2" stroke="#ced0d6" stroke-width="1.2" fill="none"/><path d="M8 5.5 V3.5 Q8 1 10.5 1 Q13 1 13 3.5 V5" stroke="#ced0d6" stroke-width="1.2" fill="none"/><rect x="4.7" y="8.3" width="1.6" height="2" fill="#8c8f94"/></svg>
</div>
<div class="a" style="left:1914px;top:0;width:5px;height:36px;background:#c6cbd4"></div>
<div class="a" style="left:1914px;top:36px;width:5px;height:50px;background:linear-gradient(180deg,#d5d8dd,#e9e9e9)"></div>
<div class="a" style="left:1914px;top:86px;width:5px;height:1px;background:#c9c9c9"></div>
<div class="a" style="left:1914px;top:310px;width:3px;height:702px;background:#7b7b7b;border-radius:2px 0 0 0"></div>
<div class="a" style="left:1917px;top:310px;width:2px;height:722px;background:#dcdcdc"></div>
<div class="a" style="left:0;top:1032px;width:1919px;height:47px;background:linear-gradient(90deg,#e2e2e0 0px,#e3e2e0 110px,#eee1dc 170px,#f1e0d9 320px,#f2e6da 400px,#f3e9d8 500px,#f1e9d8 900px,#e7e8d1 1020px,#e8e8d2 1100px,#f0e8d8 1170px,#eee8d7 1380px,#e8e9d4 1430px,#f1e8d7 1470px,#f1e9d9 1620px,#e9ead6 1750px,#e7e7e2 1860px,#e6e6e4 1919px)"></div>
<div class="a" style="left:507px;top:1045px;width:11px;height:11px;background:linear-gradient(135deg,#36c1f7,#0a74d6)"></div>
<div class="a" style="left:519px;top:1045px;width:11px;height:11px;background:linear-gradient(135deg,#36c1f7,#0a74d6)"></div>
<div class="a" style="left:507px;top:1057px;width:11px;height:11px;background:linear-gradient(135deg,#36c1f7,#0a74d6)"></div>
<div class="a" style="left:519px;top:1057px;width:11px;height:11px;background:linear-gradient(135deg,#36c1f7,#0a74d6)"></div>
<div class="a" style="left:544px;top:1041px;width:218px;height:30px;border-radius:15px;background:#faf7f0;border:1px solid #dcd8cd"></div>
<svg class="a" style="left:555px;top:1048px" width="16" height="16"><circle cx="6.5" cy="6.5" r="5.3" stroke="#1c1c1c" stroke-width="1.6" fill="none"/><path d="M10.3 10.3 L14.5 14.5" stroke="#1c1c1c" stroke-width="1.8"/></svg>
<div class="a" style="left:580.30px;top:1049.42px;font-size:13.8px;line-height:13.8px;letter-spacing:-0.660px;color:#5f5f5f;white-space:nowrap;">Buscar</div>
<svg class="a" style="left:709px;top:1043px" width="50" height="27"><defs><linearGradient id="skyG" x1="0" y1="0" x2="0" y2="1"><stop offset="0" stop-color="#2aa3c8"/><stop offset="0.45" stop-color="#2f8f8a"/><stop offset="0.7" stop-color="#c7a27a"/><stop offset="1" stop-color="#5a3a28"/></linearGradient></defs><path d="M6 2 Q14 0.8 25 1 Q38 0.8 44 3 Q49 5 48.5 10 Q47.5 13 48 16 Q46 18 46.5 21 Q44 25.5 25 25.5 Q9 25.8 5 23 Q2.5 20 3 17 Q0 15 1 12.5 Q5 11 6 9 Q4 6 6 2 Z" fill="url(#skyG)"/><g fill="#2a2b12"><ellipse cx="25" cy="7.5" rx="10" ry="6.5"/><path d="M23.3 12 L26.8 12 L27.2 25 L22.6 25 Z"/><ellipse cx="11.5" cy="14.5" rx="4" ry="3"/><rect x="11" y="16" width="1.6" height="7.5"/><ellipse cx="39.5" cy="13.5" rx="5" ry="3.4"/><rect x="39" y="16" width="1.8" height="8"/></g><g fill="#7a7420" opacity="0.7"><circle cx="21" cy="5" r="1"/><circle cx="27" cy="4" r="1"/><circle cx="30" cy="8" r="1"/><circle cx="19" cy="9" r="0.9"/><circle cx="38" cy="12" r="0.9"/><circle cx="11" cy="13.5" r="0.8"/></g></svg>
<div class="a" style="left:775px;top:1051px;width:18px;height:16px;background:linear-gradient(180deg,#3a3a3a,#151515);border-radius:2px"></div>
<div class="a" style="left:781px;top:1045px;width:18px;height:16px;background:linear-gradient(135deg,rgba(255,255,255,0.95),rgba(235,235,235,0.8));border-radius:1px"></div>
<div class="a" style="left:781px;top:1051px;width:12px;height:10px;background:linear-gradient(135deg,#c8c8c8,#a9a9a9);border-radius:0 0 2px 0"></div>
<div class="a" style="left:819px;top:1047px;width:24px;height:18px;background:#f8f8f8;border:1px solid #6a6a6a;border-radius:1px"></div>
<div class="a" style="left:826px;top:1050px;width:10px;height:13px;background:linear-gradient(180deg,#1690e0,#0a6cc4);border-radius:1px"></div>
<svg class="a" style="left:820px;top:1049px" width="22" height="15"><g stroke="#555" stroke-width="1"><path d="M1.5 1.5 H4.5 M1.5 3.5 H4.5 M1.5 5.5 H4.5 M1.5 10.5 H4.5 M1.5 12.5 H4.5 M17.5 1.5 H20.5 M17.5 3.5 H20.5 M17.5 5.5 H20.5"/></g></svg>
<svg class="a" style="left:863px;top:1044px" width="25" height="23"><defs><linearGradient id="cpA" x1="0" y1="0" x2="0" y2="1"><stop offset="0" stop-color="#0fb0f5"/><stop offset="0.5" stop-color="#3cc46a"/><stop offset="0.8" stop-color="#f2c21a"/><stop offset="1" stop-color="#f26a2a"/></linearGradient><linearGradient id="cpB" x1="0" y1="0" x2="0" y2="1"><stop offset="0" stop-color="#2a5ce8"/><stop offset="0.35" stop-color="#b04fe8"/><stop offset="0.7" stop-color="#f05a8a"/><stop offset="1" stop-color="#f9a05a"/></linearGradient></defs><path d="M9 1 H17 Q19.5 1 20 3.5 L21 6 Q14 5 12.5 10 L10.5 17 Q9.5 20.5 6 20.5 H4.5 Q0.5 20.5 0.5 17 V11 Q0.5 5 4 2.5 Q6 1 9 1 Z" fill="url(#cpA)"/><path d="M16 22 H8 Q5.5 22 5 19.5 L4 17 Q11 18 12.5 13 L14.5 6 Q15.5 2.5 19 2.5 H20.5 Q24.5 2.5 24.5 6 V12 Q24.5 18 21 20.5 Q19 22 16 22 Z" fill="url(#cpB)"/></svg>
<svg class="a" style="left:906px;top:1044px" width="24" height="24"><path d="M12 1 A11 11 0 0 1 21.5 6.5 H12 Z" fill="#db4437"/><circle cx="12" cy="12" r="11" fill="#db4437"/><path d="M12 12 L21.53 6.5 A11 11 0 0 1 12 23 Z" fill="#fbbc05"/><path d="M12 12 L12 23 A11 11 0 0 1 2.47 6.5 Z" fill="#1e9e57"/><path d="M12 12 L2.47 6.5 A11 11 0 0 1 21.53 6.5 Z" fill="#ea4335"/><circle cx="12" cy="12" r="5.2" fill="#fff"/><circle cx="12" cy="12" r="4.1" fill="#3f8cf2"/></svg>
<svg class="a" style="left:950px;top:1045px" width="25" height="22"><path d="M1 2 Q1 1 2 1 H9 L11 3 H23 Q24 3 24 4 V20 Q24 21 23 21 H2 Q1 21 1 20 Z" fill="#e6a817"/><path d="M1 7 H24 V20 Q24 21 23 21 H2 Q1 21 1 20 Z" fill="#f8c938"/><rect x="6" y="15" width="13" height="5" rx="1" fill="#2a86d8"/></svg>
<svg class="a" style="left:994px;top:1044px" width="24" height="24"><circle cx="12" cy="12" r="11" fill="#1a8fd6"/><path d="M23 12 A11 11 0 0 0 3 6 Q8 2 14 5 Q20 9 16 13 H8 Q8 19 16 19 Q20 19 22 17 A11 11 0 0 0 23 12 Z" fill="#3fcf7b"/><path d="M8 13 Q8 19 16 19 Q12 22 7 20 Q1 16 3 9 Q4 14 8 13Z" fill="#0c5ca8"/></svg>
<div class="a" style="left:1039px;top:1044px;width:24px;height:24px;border-radius:6px;background:linear-gradient(180deg,#222,#080808)"></div>
<svg class="a" style="left:1040px;top:1048px" width="22" height="16"><defs><linearGradient id="wxA" x1="0" y1="0" x2="1" y2="0"><stop offset="0" stop-color="#19d3f5"/><stop offset="0.5" stop-color="#2f6bf7"/><stop offset="1" stop-color="#2f6bf7"/></linearGradient></defs><path d="M2.5 4 Q3 13.5 6.5 13.5 Q9.5 13.5 11 8 Q12.5 2.5 15.5 2.5 Q18.5 2.5 19.5 6" stroke="url(#wxA)" stroke-width="3.2" fill="none" stroke-linecap="round"/><path d="M19.5 5 Q19.5 13.5 15.5 13.5 Q12.5 13.5 11 8 Q9.5 2.5 6.5 2.5" stroke="#2f5ef0" stroke-width="3.2" fill="none" stroke-linecap="round"/><path d="M13.5 2.6 Q17 2 18.5 6" stroke="#45d65a" stroke-width="3" fill="none" stroke-linecap="round"/></svg>
<svg class="a" style="left:1082px;top:1043px" width="25" height="26"><path d="M3 12 Q3 2 12 2 Q17 2 19 5 Q24 7 24 13 Q24 18 21.5 20 V25 H17.5 V20.5 H14 V25 H10 V19 Q7 18.5 6.5 17 L5 22 Q2.5 18 3 12 Z" fill="#36a6f2"/><path d="M5.5 14 L8 13 L6.5 17 Z" fill="#dfeefa"/><path d="M10 11.5 Q13 17 17 14.5 Q19.5 12.5 19.5 7" stroke="#1f7fcb" stroke-width="0.6" fill="none"/></svg>
<svg class="a" style="left:1127px;top:1044px" width="24" height="24"><path d="M12 1 A11 11 0 0 1 21.5 6.5 H12 Z" fill="#db4437"/><circle cx="12" cy="12" r="11" fill="#db4437"/><path d="M12 12 L21.53 6.5 A11 11 0 0 1 12 23 Z" fill="#fbbc05"/><path d="M12 12 L12 23 A11 11 0 0 1 2.47 6.5 Z" fill="#1e9e57"/><path d="M12 12 L2.47 6.5 A11 11 0 0 1 21.53 6.5 Z" fill="#ea4335"/><circle cx="12" cy="12" r="5.2" fill="#fff"/><circle cx="12" cy="12" r="4.1" fill="#3f8cf2"/></svg>
<div class="a" style="left:1140.5px;top:1038.5px;width:16px;height:16px;border-radius:50%;background:#0e8a72;color:#fff;font-size:10px;line-height:16px;text-align:center">F</div>
<svg class="a" style="left:1170px;top:1044px" width="24" height="24"><path d="M17 1 L23 4 V20 L17 23 L7 13.5 L3 17 L1 16 V8 L3 7 L7 10.5 Z" fill="#1f8ad2"/><path d="M17 1 L23 4 V20 L17 23 Z" fill="#30a7ef"/><path d="M17 6.5 V17.5 L11 12 Z" fill="#f1e8d9"/></svg>
<svg class="a" style="left:1215px;top:1044px" width="24" height="24"><path d="M12 1 A11 11 0 0 1 21.5 6.5 H12 Z" fill="#db4437"/><circle cx="12" cy="12" r="11" fill="#db4437"/><path d="M12 12 L21.53 6.5 A11 11 0 0 1 12 23 Z" fill="#fbbc05"/><path d="M12 12 L12 23 A11 11 0 0 1 2.47 6.5 Z" fill="#1e9e57"/><path d="M12 12 L2.47 6.5 A11 11 0 0 1 21.53 6.5 Z" fill="#ea4335"/><circle cx="12" cy="12" r="5.2" fill="#fff"/><circle cx="12" cy="12" r="4.1" fill="#3f8cf2"/></svg>
<div class="a" style="left:1228px;top:1038.5px;width:16px;height:16px;border-radius:50%;background:#5b6fc9;color:#fff;font-size:10px;line-height:16px;text-align:center">E</div>
<svg class="a" style="left:1258px;top:1044px" width="24" height="24"><path d="M12 1 A11 11 0 0 1 21.5 6.5 H12 Z" fill="#db4437"/><circle cx="12" cy="12" r="11" fill="#db4437"/><path d="M12 12 L21.53 6.5 A11 11 0 0 1 12 23 Z" fill="#fbbc05"/><path d="M12 12 L12 23 A11 11 0 0 1 2.47 6.5 Z" fill="#1e9e57"/><path d="M12 12 L2.47 6.5 A11 11 0 0 1 21.53 6.5 Z" fill="#ea4335"/><circle cx="12" cy="12" r="5.2" fill="#fff"/><circle cx="12" cy="12" r="4.1" fill="#3f8cf2"/></svg>
<svg class="a" style="left:1302px;top:1044px" width="24" height="24"><path d="M17 1 L23 4 V20 L17 23 L7 14 L3 17 L1 16 V8 L3 7 L7 10 Z" fill="#8c56d8"/><path d="M17 1 L23 4 V20 L17 23 Z" fill="#b48ef0"/><path d="M17 7 V17 L11 12 Z" fill="#efe8da"/></svg>
<div class="a" style="left:1346px;top:1045px;width:25px;height:21px;border-radius:3px;background:#2f2f2f;border-top:4px solid #4a4a4a"></div>
<svg class="a" style="left:1350px;top:1052px" width="18" height="12"><path d="M1 1 L5 4.5 L1 8" stroke="#e8e8e8" stroke-width="1.4" fill="none"/><path d="M7 9.5 H13" stroke="#e8e8e8" stroke-width="1.4"/></svg>
<div class="a" style="left:1384px;top:1037px;width:38px;height:38px;border-radius:5px;background:rgba(255,255,255,0.5)"></div>
<svg class="a" style="left:1391px;top:1044px" width="24" height="24"><defs><linearGradient id="ijG" x1="0" y1="1" x2="1" y2="0"><stop offset="0.3" stop-color="#087cfa"/><stop offset="0.65" stop-color="#9a47b8"/><stop offset="1" stop-color="#fe2857"/></linearGradient></defs><path d="M8 0.5 H22 Q23.5 0.5 23.5 2 V14.5 L14.5 23.5 H2 Q0.5 23.5 0.5 22 V8.5 Z" fill="url(#ijG)"/><rect x="4.3" y="4.5" width="14.8" height="14.8" fill="#000"/><path d="M6.6 7.3 H9.4 M8 7.3 V11.6 M6.6 11.6 H9.4" stroke="#fff" stroke-width="1.1"/><path d="M10.2 7.3 H13.2 M12.4 7.3 V10.4 Q12.4 11.7 11 11.7 H10" stroke="#fff" stroke-width="1.1" fill="none"/><rect x="6.6" y="15.6" width="5.2" height="1.3" fill="#fff"/></svg>
<div class="a" style="left:1395px;top:1072px;width:16px;height:3px;border-radius:2px;background:#0a70d0"></div>
<div class="a" style="left:959px;top:1072px;width:6px;height:3px;border-radius:2px;background:#7a7875"></div>
<div class="a" style="left:1047px;top:1072px;width:6px;height:3px;border-radius:2px;background:#7a7875"></div>
<div class="a" style="left:1091px;top:1072px;width:6px;height:3px;border-radius:2px;background:#7a7875"></div>
<div class="a" style="left:1135px;top:1072px;width:6px;height:3px;border-radius:2px;background:#7a7875"></div>
<div class="a" style="left:1179px;top:1072px;width:6px;height:3px;border-radius:2px;background:#7a7875"></div>
<div class="a" style="left:1223px;top:1072px;width:6px;height:3px;border-radius:2px;background:#7a7875"></div>
<div class="a" style="left:1267px;top:1072px;width:6px;height:3px;border-radius:2px;background:#7a7875"></div>
<div class="a" style="left:1311px;top:1072px;width:6px;height:3px;border-radius:2px;background:#7a7875"></div>
<div class="a" style="left:1355px;top:1072px;width:6px;height:3px;border-radius:2px;background:#7a7875"></div>
<svg class="a" style="left:1675px;top:1051px" width="14" height="9"><path d="M1 7.5 L7 1.5 L13 7.5" stroke="#1c1c1c" stroke-width="1.3" fill="none"/></svg>
<svg class="a" style="left:1704px;top:1046px" width="20" height="20"><path d="M3 10 A7 7 0 0 1 15 5 M17 10 A7 7 0 0 1 5 15" stroke="#1c1c1c" stroke-width="1.3" fill="none"/><path d="M15 1.5 V5.5 H11" stroke="#1c1c1c" stroke-width="1.3" fill="none"/><path d="M5 18.5 V14.5 H9" stroke="#1c1c1c" stroke-width="1.3" fill="none"/><circle cx="14.5" cy="14" r="3.8" fill="#0a6fd8"/></svg>
<div class="a" style="left:1742.00px;top:1043.68px;font-size:11.5px;line-height:11.5px;letter-spacing:-1.500px;color:#1c1c1c;white-space:nowrap;">ESP</div>
<div class="a" style="left:1741.50px;top:1059.68px;font-size:11.5px;line-height:11.5px;letter-spacing:-0.500px;color:#1c1c1c;white-space:nowrap;">LAA</div>
<svg class="a" style="left:1780px;top:1046px" width="18" height="20"><rect x="0.7" y="2.5" width="13" height="10" stroke="#1c1c1c" stroke-width="1.2" fill="none"/><path d="M4 16 H11 M7.5 12.5 V16" stroke="#1c1c1c" stroke-width="1.2"/><rect x="12" y="0.7" width="4" height="6" rx="1" stroke="#1c1c1c" stroke-width="1.1" fill="#f0ecdf"/></svg>
<svg class="a" style="left:1805px;top:1049px" width="16" height="14"><path d="M1 4.5 H4 L8 1 V13 L4 9.5 H1 Z" stroke="#1c1c1c" stroke-width="1.1" fill="none" stroke-linejoin="round"/><path d="M10.5 4.5 Q12 7 10.5 9.5 M12.5 3 Q15 7 12.5 11" stroke="#1c1c1c" stroke-width="1.1" fill="none"/></svg>
<div class="a" style="left:1872.00px;top:1042.35px;font-size:11.8px;line-height:11.8px;letter-spacing:-0.350px;color:#1c1c1c;white-space:nowrap;">08:28</div>
<div class="a" style="left:1839.40px;top:1058.65px;font-size:11.8px;line-height:11.8px;letter-spacing:0.244px;color:#1c1c1c;white-space:nowrap;">13/11/2025</div>
</body></html>
